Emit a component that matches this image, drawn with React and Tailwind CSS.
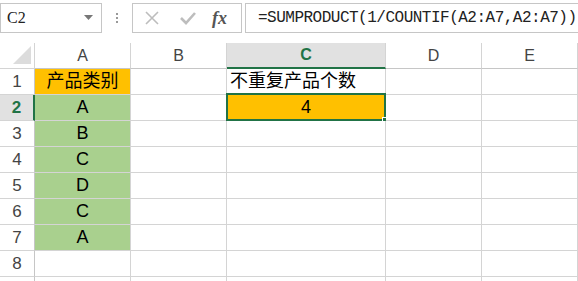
import React from "react";

const cols = [
  { key: "A", w: "w-[96px]" },
  { key: "B", w: "w-[96px]" },
  { key: "C", w: "w-[159px]" },
  { key: "D", w: "w-[96px]" },
  { key: "E", w: "w-[96px]" },
];

const data = {
  1: { A: { t: "产品类别", bg: "bg-[#FFC000]", center: true }, C: { t: "不重复产品个数" } },
  2: { A: { t: "A", bg: "bg-[#A9D08E]", center: true }, C: { t: "4", bg: "bg-[#FFC000]", center: true, sel: true } },
  3: { A: { t: "B", bg: "bg-[#A9D08E]", center: true } },
  4: { A: { t: "C", bg: "bg-[#A9D08E]", center: true } },
  5: { A: { t: "D", bg: "bg-[#A9D08E]", center: true } },
  6: { A: { t: "C", bg: "bg-[#A9D08E]", center: true } },
  7: { A: { t: "A", bg: "bg-[#A9D08E]", center: true } },
  8: {},
  9: {},
};

const font = { fontFamily: '"Liberation Sans", "Noto Sans CJK SC", sans-serif' };

export default function App() {
  return (
    <div className="w-[578px] h-[281px] overflow-hidden bg-white relative" style={font}>
      {/* top bar */}
      <div className="h-[43px] flex items-start pt-[3px]">
        <div className="w-[102px] h-[30px] border border-[#c6c6c6] flex items-center justify-between pl-[6px] pr-[8px]">
          <span className="text-[16px] text-[#222]" style={{ fontFamily: '"Liberation Serif", serif' }}>C2</span>
          <svg width="9" height="6" viewBox="0 0 9 6"><path d="M0 0 L9 0 L4.5 5 Z" fill="#777" /></svg>
        </div>
        <div className="w-[30px] h-[30px] flex flex-col items-center justify-center gap-[2px]">
          <span className="w-[2px] h-[2px] bg-[#999]" />
          <span className="w-[2px] h-[2px] bg-[#999]" />
          <span className="w-[2px] h-[2px] bg-[#999]" />
        </div>
        <div className="w-[110px] h-[30px] border border-[#c6c6c6] flex items-center">
          <svg className="ml-[11px]" width="16" height="16" viewBox="0 0 16 16">
            <path d="M2 2 L14 14 M14 2 L2 14" stroke="#bdbdbd" strokeWidth="1.6" />
          </svg>
          <svg className="ml-[20px]" width="16" height="14" viewBox="0 0 16 14">
            <path d="M1 7 L6 12 L15 2" stroke="#bdbdbd" strokeWidth="2.6" fill="none" />
          </svg>
          <span className="ml-[16px] text-[18px] italic text-[#555] font-bold" style={{ fontFamily: '"Liberation Serif", serif' }}>fx</span>
        </div>
        <div className="ml-[3px] flex-1 h-[30px] border border-[#c6c6c6] border-r-0 flex items-center pl-[12px]">
          <span className="text-[16px] text-[#222] tracking-[-0.5px]" style={{ fontFamily: '"Liberation Mono", monospace' }}>
            =SUMPRODUCT(1/COUNTIF(A2:A7,A2:A7))
          </span>
        </div>
      </div>

      {/* header row */}
      <div className="flex h-[26px]">
        <div className="w-[35px] h-full border-r border-b border-[#d4d4d4] relative bg-white">
          <svg className="absolute left-[13px] top-[3px]" width="18" height="18" viewBox="0 0 18 18">
            <path d="M18 0 L18 18 L0 18 Z" fill="#dcdcdc" />
          </svg>
        </div>
        {cols.map((c) => {
          const active = c.key === "C";
          return (
            <div
              key={c.key}
              className={`${c.w} h-full border-r border-[#d4d4d4] flex items-center justify-center text-[16px] ${
                active
                  ? "bg-[#e1e1e1] border-b-2 border-b-[#217346] text-[#217346] font-bold"
                  : "bg-white border-b border-b-[#c6c6c6] text-[#444]"
              }`}
            >
              {c.key}
            </div>
          );
        })}
      </div>

      {/* rows */}
      {Object.keys(data).map((r) => {
        const row = data[r];
        const active = r === "2";
        return (
          <div key={r} className="flex h-[26px]">
            <div
              className={`w-[35px] h-full border-b border-[#d4d4d4] flex items-center justify-center text-[17px] ${
                active
                  ? "bg-[#e1e1e1] border-r-2 border-r-[#217346] text-[#217346] font-bold"
                  : "bg-white border-r border-r-[#c6c6c6] text-[#444]"
              }`}
            >
              {r === "9" ? "" : r}
            </div>
            {cols.map((c) => {
              const cell = row[c.key];
              return (
                <div
                  key={c.key}
                  className={`${c.w} h-full border-r border-b border-[#d4d4d4] relative flex items-center text-[18px] text-black ${
                    cell?.bg ?? "bg-white"
                  } ${cell?.center ? "justify-center" : "justify-start pl-[3px]"}`}
                >
                  {cell?.t}
                  {cell?.sel && (
                    <>
                      <div className="absolute -left-[1px] -top-[2px] -right-[1px] -bottom-[1px] border-2 border-[#217346] pointer-events-none" />
                      <div className="absolute -right-[4px] -bottom-[4px] w-[7px] h-[7px] bg-[#217346] border border-white" />
                    </>
                  )}
                </div>
              );
            })}
          </div>
        );
      })}
    </div>
  );
}
